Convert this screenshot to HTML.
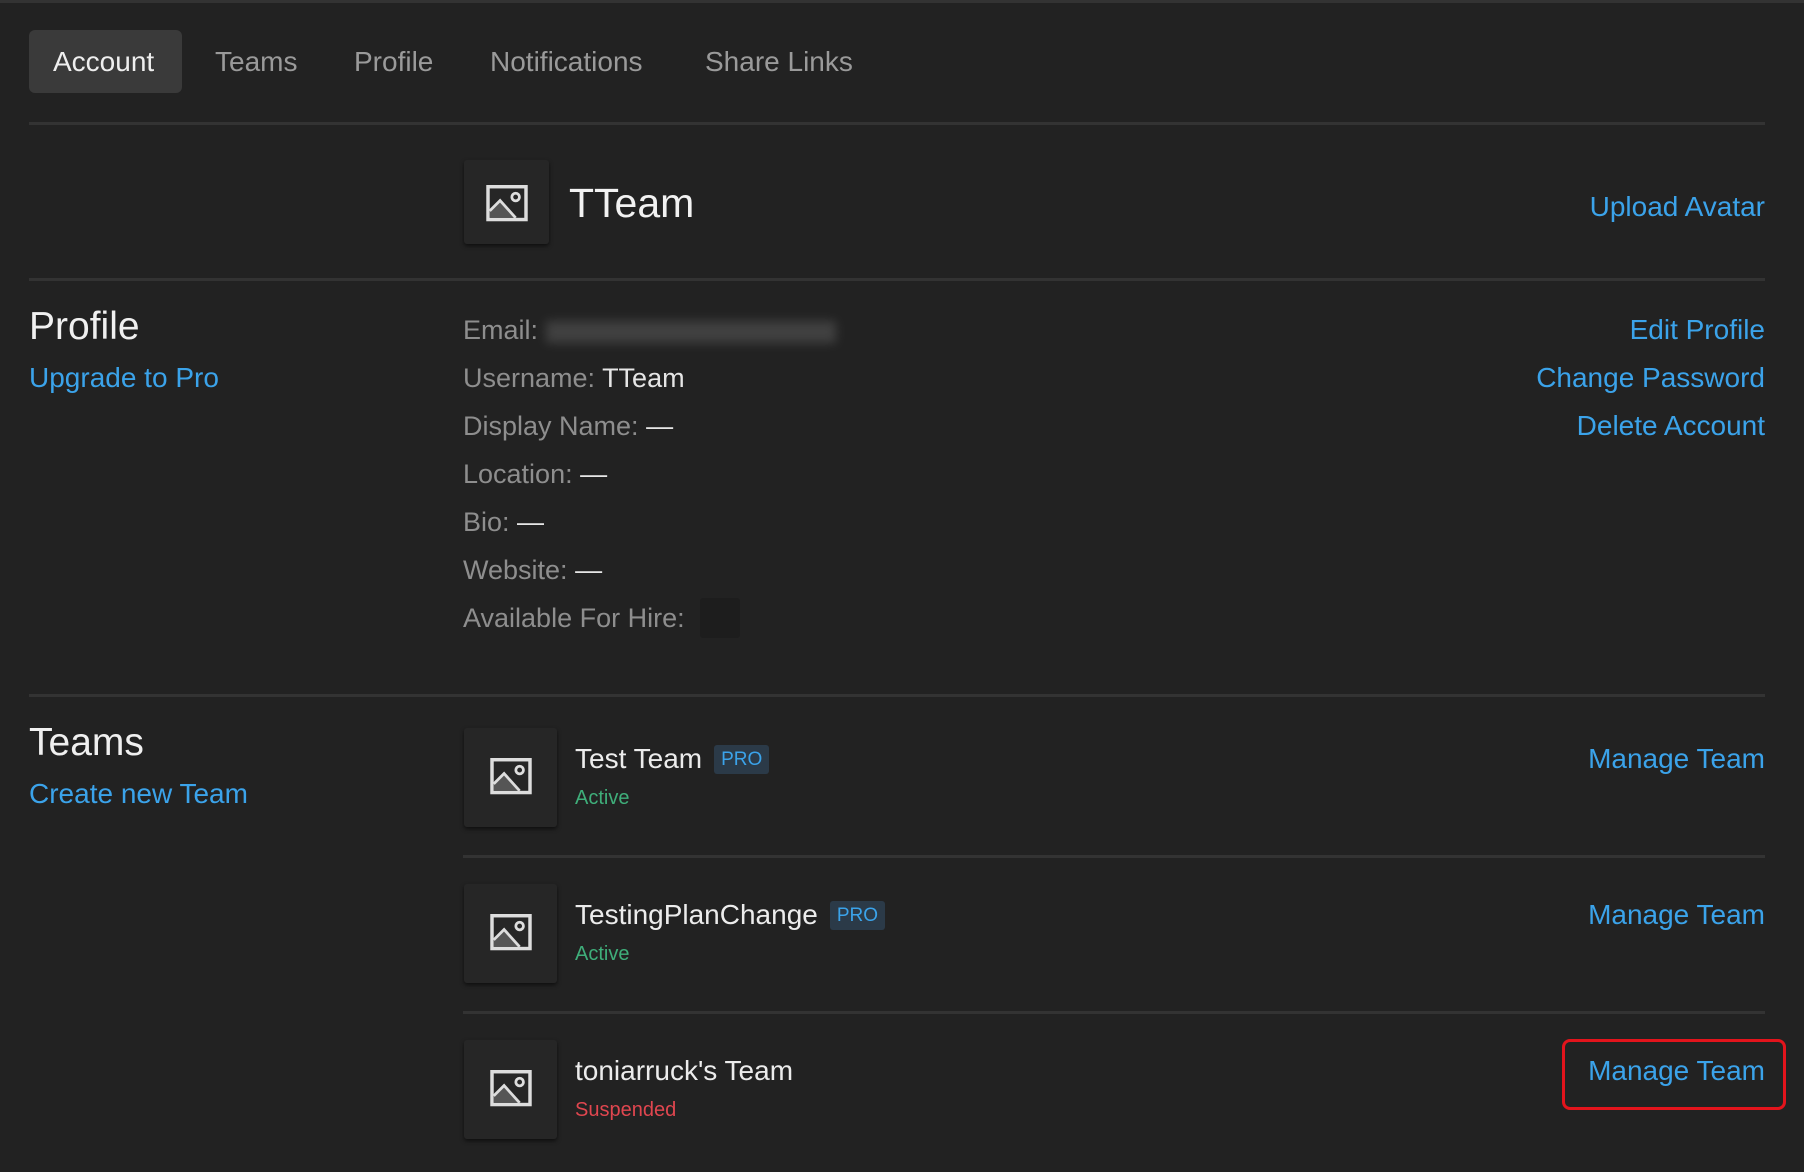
<!DOCTYPE html>
<html><head><style>
body{margin:0;width:1804px;height:1172px;background:#222222;font-family:"Liberation Sans",sans-serif;position:relative;overflow:hidden}
div,span{position:absolute;white-space:nowrap}
.tab{top:46px;font-size:28px;color:#9a9a9a}
.hr{left:29px;width:1736px;height:3px;background:#333}
.blue{color:#3ba3ea}
.r{right:39px;font-size:28px;line-height:34px}
.lbl{left:463px;font-size:27px;color:#8e8e8e;line-height:34px}
.lbl b{font-weight:normal;color:#e6e6e6}
.av{background:#262626;box-shadow:0 2px 4px rgba(0,0,0,.6);border-radius:3px}
.h{left:29px;font-size:39px;color:#f0f0f0}
.name{left:575px;font-size:28px;color:#ececec;line-height:34px}
.st{left:575px;font-size:20px}
.pro{font-size:19px;color:#3ba3ea;background:#2b3a48;border-radius:3px;padding:4px 7px;position:relative;margin-left:12px;top:-3px}
</style></head><body>
<div style="left:0;top:0;width:1804px;height:3px;background:#333"></div>
<div style="left:29px;top:30px;width:153px;height:63px;background:#3a3a3a;border-radius:6px"></div>
<div class="tab" style="left:53px;color:#eee">Account</div>
<div class="tab" style="left:215px">Teams</div>
<div class="tab" style="left:354px">Profile</div>
<div class="tab" style="left:490px">Notifications</div>
<div class="tab" style="left:705px">Share Links</div>
<div class="hr" style="top:122px"></div>

<svg width="0" height="0" style="position:absolute"><defs><symbol id="img" viewBox="0 0 24 22"><rect x="1" y="1" width="22" height="19" fill="none" stroke="#ddd" stroke-width="2"/><path d="M2 19 L2 14 L8 8 L17 19Z" fill="#555"/><path d="M2 15 L8 9 L17 19" fill="none" stroke="#ddd" stroke-width="1.6"/><circle cx="17" cy="7" r="2.2" fill="none" stroke="#ddd" stroke-width="1.6"/></symbol></defs></svg>

<div class="av" style="left:464px;top:160px;width:85px;height:84px"></div>
<svg style="position:absolute;left:486px;top:185px" width="42" height="38"><use href="#img"/></svg>
<div style="left:569px;top:180px;font-size:41px;color:#f2f2f2">TTeam</div>
<div class="r blue" style="top:190px">Upload Avatar</div>
<div class="hr" style="top:278px"></div>

<div class="h" style="top:305px">Profile</div>
<div class="blue" style="left:29px;top:362px;font-size:28px">Upgrade to Pro</div>
<div class="lbl" style="top:313px">Email: <span style="position:relative;display:inline-block;width:290px;height:22px;background:#555;filter:blur(5px);vertical-align:middle;opacity:.6"></span></div>
<div class="lbl" style="top:361px">Username: <b>TTeam</b></div>
<div class="lbl" style="top:409px">Display Name: <b>—</b></div>
<div class="lbl" style="top:457px">Location: <b>—</b></div>
<div class="lbl" style="top:505px">Bio: <b>—</b></div>
<div class="lbl" style="top:553px">Website: <b>—</b></div>
<div class="lbl" style="top:601px">Available For Hire:</div>
<div style="left:700px;top:598px;width:40px;height:40px;background:#1d1d1d;border-radius:3px"></div>
<div class="r blue" style="top:313px">Edit Profile</div>
<div class="r blue" style="top:361px">Change Password</div>
<div class="r blue" style="top:409px">Delete Account</div>
<div class="hr" style="top:694px"></div>

<div class="h" style="top:721px">Teams</div>
<div class="blue" style="left:29px;top:778px;font-size:28px">Create new Team</div>

<div class="av" style="left:464px;top:728px;width:93px;height:99px"></div>
<svg style="position:absolute;left:490px;top:758px" width="42" height="38"><use href="#img"/></svg>
<div class="name" style="top:742px">Test Team<span class="pro">PRO</span></div>
<div class="st" style="top:787px;color:#3fae7a">Active</div>
<div class="r blue" style="top:742px">Manage Team</div>
<div class="hr" style="left:463px;width:1302px;top:855px"></div>

<div class="av" style="left:464px;top:884px;width:93px;height:99px"></div>
<svg style="position:absolute;left:490px;top:914px" width="42" height="38"><use href="#img"/></svg>
<div class="name" style="top:898px">TestingPlanChange<span class="pro">PRO</span></div>
<div class="st" style="top:943px;color:#3fae7a">Active</div>
<div class="r blue" style="top:898px">Manage Team</div>
<div class="hr" style="left:463px;width:1302px;top:1011px"></div>

<div class="av" style="left:464px;top:1040px;width:93px;height:99px"></div>
<svg style="position:absolute;left:490px;top:1070px" width="42" height="38"><use href="#img"/></svg>
<div class="name" style="top:1054px">toniarruck's Team</div>
<div class="st" style="top:1099px;color:#e0464f">Suspended</div>
<div class="r blue" style="top:1054px">Manage Team</div>
<div style="left:1562px;top:1039px;width:218px;height:65px;border:3px solid #e3141c;border-radius:8px"></div>
</body></html>
